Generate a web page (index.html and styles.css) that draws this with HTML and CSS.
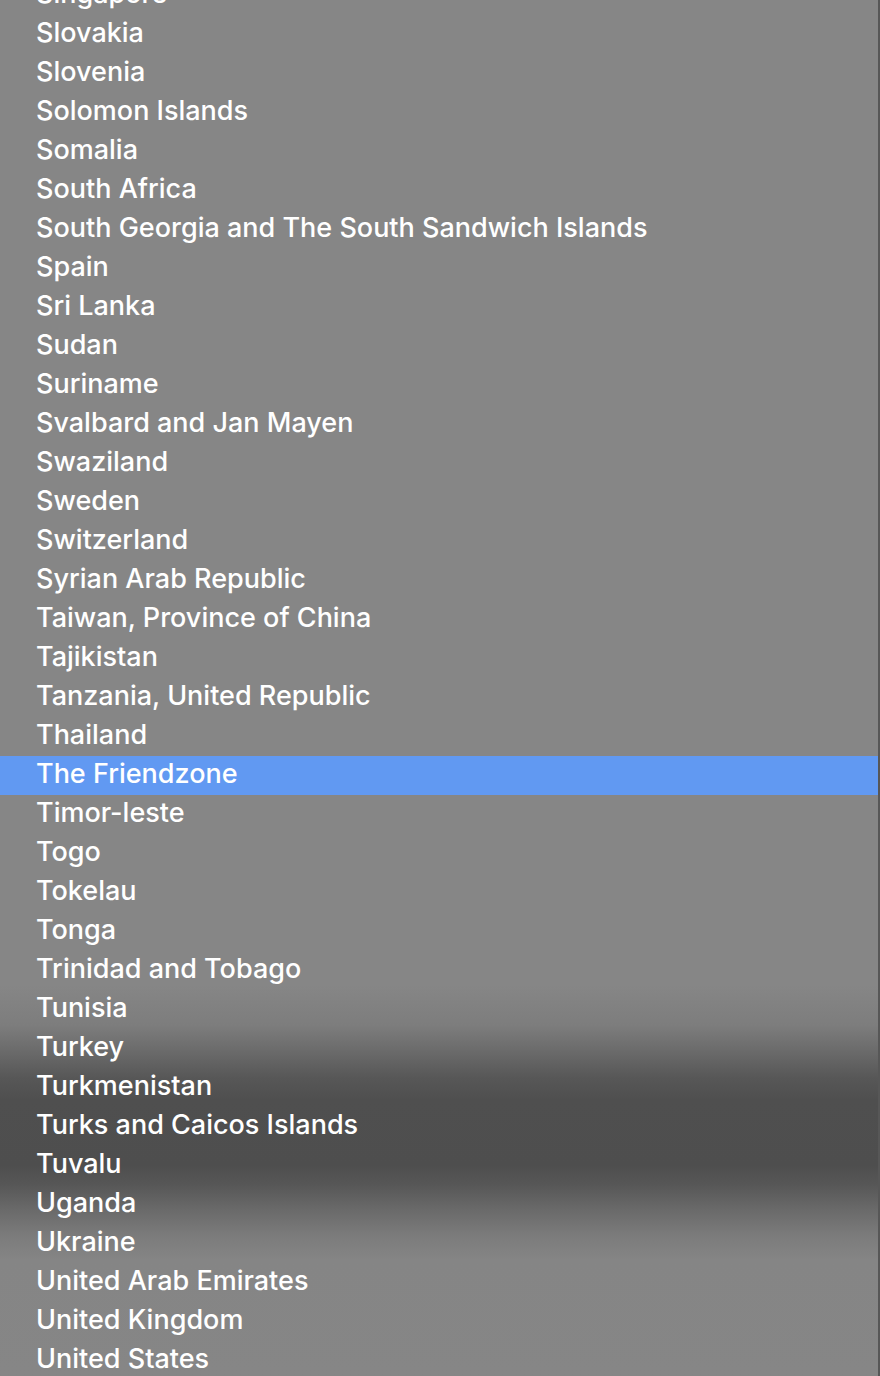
FILE: index.html
```html
<!DOCTYPE html>
<html>
<head>
<meta charset="utf-8">
<link rel="stylesheet" href="styles.css">
</head>
<body>
<div class="menu">
  <ul class="list">
    <li class="item">Singapore</li>
    <li class="item">Slovakia</li>
    <li class="item">Slovenia</li>
    <li class="item">Solomon Islands</li>
    <li class="item">Somalia</li>
    <li class="item">South Africa</li>
    <li class="item">South Georgia and The South Sandwich Islands</li>
    <li class="item">Spain</li>
    <li class="item">Sri Lanka</li>
    <li class="item">Sudan</li>
    <li class="item">Suriname</li>
    <li class="item">Svalbard and Jan Mayen</li>
    <li class="item">Swaziland</li>
    <li class="item">Sweden</li>
    <li class="item">Switzerland</li>
    <li class="item">Syrian Arab Republic</li>
    <li class="item">Taiwan, Province of China</li>
    <li class="item">Tajikistan</li>
    <li class="item">Tanzania, United Republic</li>
    <li class="item">Thailand</li>
    <li class="item selected">The Friendzone</li>
    <li class="item">Timor-leste</li>
    <li class="item">Togo</li>
    <li class="item">Tokelau</li>
    <li class="item">Tonga</li>
    <li class="item">Trinidad and Tobago</li>
    <li class="item">Tunisia</li>
    <li class="item">Turkey</li>
    <li class="item">Turkmenistan</li>
    <li class="item">Turks and Caicos Islands</li>
    <li class="item">Tuvalu</li>
    <li class="item">Uganda</li>
    <li class="item">Ukraine</li>
    <li class="item">United Arab Emirates</li>
    <li class="item">United Kingdom</li>
    <li class="item">United States</li>
  </ul>
</div>
</body>
</html>
```

FILE: styles.css
```css
html, body {
  margin: 0;
  padding: 0;
  width: 880px;
  height: 1376px;
  overflow: hidden;
}

.menu {
  width: 878px;
  height: 1376px;
  border-right: 2px solid #575757;
  overflow: hidden;
  background: linear-gradient(to bottom,
    #868686 0px,
    #868686 985px,
    #7d7d7d 1025px,
    #6a6a6a 1052px,
    #575757 1078px,
    #4f4f4f 1100px,
    #4e4e4e 1165px,
    #575757 1185px,
    #6a6a6a 1210px,
    #7b7b7b 1235px,
    #858585 1260px,
    #868686 1376px);
  font-family: Inter, "Noto Sans", sans-serif;
}

.list {
  list-style: none;
  margin: -24px 0 0 0;
  padding: 0;
}

.item {
  height: 39px;
  line-height: 35px;
  padding-bottom: 4px;
  box-sizing: border-box;
  padding-left: 36px;
  font-size: 27px;
  font-weight: 500;
  color: #ffffff;
  white-space: nowrap;
}

.selected {
  background: #6199f2;
}
```
